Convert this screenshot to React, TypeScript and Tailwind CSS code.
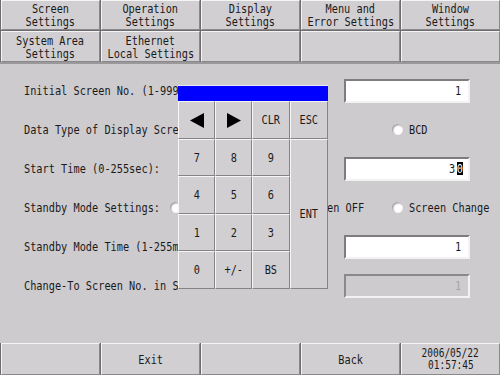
import React from "react";

const topTabs = [
    ["Screen", "Settings"],
    ["Operation", "Settings"],
    ["Display", "Settings"],
    ["Menu and", "Error Settings"],
    ["Window", "Settings"],
];

const subTabs = [
    ["System Area", "Settings"],
    ["Ethernet", "Local Settings"],
    [],
    [],
    [],
];

function T({ children, center }: { children: React.ReactNode; center?: boolean }) {
    return (
        <span
            className={
                center
                    ? "inline-block whitespace-pre scale-x-[0.79] origin-center"
                    : "inline-block whitespace-pre scale-x-[0.79] origin-left"
            }
        >
            {children}
        </span>
    );
}

function Btn({ lines }: { lines: string[] }) {
    return (
        <div className="flex flex-col items-center justify-center bg-[#d2cfd2] border border-t-[#f4f4f4] border-l-[#f4f4f4] border-b-[#8a888a] border-r-[#8a888a] leading-[13px]">
            {lines.map((l) => (
                <T key={l} center>
                    {l}
                </T>
            ))}
        </div>
    );
}

// label cut where the keypad popup starts
function Label({ children, w }: { children: React.ReactNode; w: string }) {
    return (
        <div className={`shrink-0 pl-[24px] ${w}`}>
            <div className="w-[154px] overflow-hidden">
                <T>{children}</T>
            </div>
        </div>
    );
}

function Radio({ label, w }: { label?: string; w: string }) {
    return (
        <div className={`shrink-0 flex items-center gap-[6px] ${w}`}>
            <div className="shrink-0 w-[11px] h-[11px] rounded-full bg-white shadow-[inset_1px_1px_2px_#8f8d8f]" />
            {label && <T>{label}</T>}
        </div>
    );
}

function Field({ children, disabled }: { children: React.ReactNode; disabled?: boolean }) {
    return (
        <div
            className={
                disabled
                    ? "shrink-0 w-[126px] h-[24px] flex items-center justify-end pr-[5px] border-2 border-t-[#8a888a] border-l-[#8a888a] border-b-[#f2f2f2] border-r-[#f2f2f2] text-[#a6a4a6]"
                    : "shrink-0 w-[126px] h-[24px] flex items-center justify-end pr-[5px] bg-white border-2 border-t-[#7e7c7e] border-l-[#7e7c7e] border-b-[#f2f2f2] border-r-[#f2f2f2]"
            }
        >
            {children}
        </div>
    );
}

function Key({ children, className = "" }: { children: React.ReactNode; className?: string }) {
    return (
        <div
            className={`flex items-center justify-center bg-[#d2cfd2] border border-t-[#f6f6f6] border-l-[#f6f6f6] border-b-[#858385] border-r-[#858385] ${className}`}
        >
            {children}
        </div>
    );
}

function Arrow({ dir }: { dir: "l" | "r" }) {
    return (
        <svg width="14" height="15" viewBox="0 0 14 15">
            <polygon points={dir === "l" ? "14,0 14,15 0,7.5" : "0,0 0,15 14,7.5"} fill="#000" />
        </svg>
    );
}

export default function App() {
    return (
        <div className="relative w-[500px] h-[375px] overflow-hidden bg-[#cecbce] text-[#1a1a1a] font-['DejaVu_Sans_Mono',monospace] text-[13px] flex flex-col">
            {/* Tabs */}
            <div className="grid grid-cols-5 grid-rows-[30px_31px] gap-[1px] bg-[#6e6c6e] border-l border-[#6e6c6e]">
                {topTabs.map((t) => (
                    <Btn key={t.join()} lines={t} />
                ))}
                {subTabs.map((t, i) => (
                    <Btn key={i} lines={t} />
                ))}
            </div>
            <div className="h-[2px] bg-[#9a989a]" />

            {/* Settings rows */}
            <div className="flex flex-col pt-[7px] flex-1">
                <div className="h-[39px] flex items-center">
                    <Label w="w-[344px]">Initial Screen No. (1-9999):</Label>
                    <Field>
                        <T>1</T>
                    </Field>
                </div>
                <div className="h-[39px] flex items-center">
                    <Label w="w-[283px]">Data Type of Display Screen:</Label>
                    <Radio w="w-[109px]" />
                    <Radio label="BCD" w="w-[90px]" />
                </div>
                <div className="h-[39px] flex items-center">
                    <Label w="w-[344px]">Start Time (0-255sec):</Label>
                    <Field>
                        <span className="flex items-center">
                            <T>3</T>
                            <span className="bg-black text-white w-[6px] h-[13px] flex items-center justify-center leading-[13px]">
                                <T center>0</T>
                            </span>
                        </span>
                    </Field>
                </div>
                <div className="h-[39px] flex items-center">
                    <Label w="w-[170px]">Standby Mode Settings:</Label>
                    <Radio w="w-[113px]" />
                    <div className="shrink-0 w-[109px] pl-[44px] flex items-center">
                        <T>en OFF</T>
                    </div>
                    <Radio label="Screen Change" w="w-[100px]" />
                </div>
                <div className="h-[39px] flex items-center">
                    <Label w="w-[344px]">Standby Mode Time (1-255min):</Label>
                    <Field>
                        <T>1</T>
                    </Field>
                </div>
                <div className="h-[39px] flex items-center">
                    <Label w="w-[344px]">Change-To Screen No. in Standby:</Label>
                    <Field disabled>
                        <T>1</T>
                    </Field>
                </div>
            </div>

            {/* Bottom bar */}
            <div className="grid grid-cols-5 h-[32px] gap-[1px] bg-[#6e6c6e] border-l border-[#6e6c6e]">
                <Btn lines={[]} />
                <Btn lines={["Exit"]} />
                <Btn lines={[]} />
                <Btn lines={["Back"]} />
                <div className="flex flex-col items-center justify-center bg-[#d2cfd2] border border-t-[#f4f4f4] border-l-[#f4f4f4] border-b-[#8a888a] border-r-[#8a888a] leading-[12px] text-[12px]">
                    <T center>2006/05/22</T>
                    <T center>01:57:45</T>
                </div>
            </div>

            {/* Numeric keypad popup */}
            <div className="absolute left-[178px] top-[85px] w-[150px] flex flex-col">
                <div className="h-[16px] bg-[#0000ff] border-t border-[#e8e8f8]" />
                <div className="grid grid-cols-[37px_37px_38px_38px] grid-rows-[38px_37px_38px_37px_38px]">
                    <Key><Arrow dir="l" /></Key>
                    <Key><Arrow dir="r" /></Key>
                    <Key><T center>CLR</T></Key>
                    <Key><T center>ESC</T></Key>
                    <Key><T center>7</T></Key>
                    <Key><T center>8</T></Key>
                    <Key><T center>9</T></Key>
                    <Key className="row-span-4"><T center>ENT</T></Key>
                    <Key><T center>4</T></Key>
                    <Key><T center>5</T></Key>
                    <Key><T center>6</T></Key>
                    <Key><T center>1</T></Key>
                    <Key><T center>2</T></Key>
                    <Key><T center>3</T></Key>
                    <Key><T center>0</T></Key>
                    <Key><T center>+/-</T></Key>
                    <Key><T center>BS</T></Key>
                </div>
            </div>
        </div>
    );
}
